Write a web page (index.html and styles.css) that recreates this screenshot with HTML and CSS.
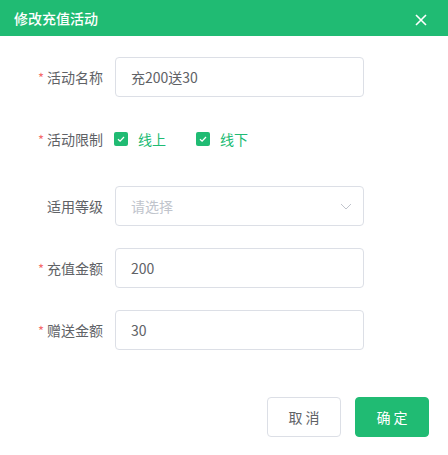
FILE: index.html
```
<!DOCTYPE html>
<html lang="zh-CN">
<head>
<meta charset="utf-8">
<title>修改充值活动</title>
<link rel="stylesheet" href="styles.css">
</head>
<body>
<div class="dialog">
  <div class="header">
    <span class="title">修改充值活动</span>
    <svg class="close" width="12" height="12" viewBox="0 0 12 12"><path d="M1 1L11 11M11 1L1 11" stroke="#fff" stroke-width="1.6" fill="none"/></svg>
  </div>
  <div class="form">
    <div class="row">
      <label class="label"><span class="req">*</span>活动名称</label>
      <div class="input"><span class="value">充200送30</span></div>
    </div>
    <div class="row row-check">
      <label class="label"><span class="req">*</span>活动限制</label>
      <div class="checks">
        <span class="check"><span class="box"><svg width="14" height="14" viewBox="0 0 14 14"><path d="M4 7.2L6.1 9.2L10 5" stroke="#fff" stroke-width="1.3" fill="none"/></svg></span><span class="ctext">线上</span></span>
        <span class="check"><span class="box"><svg width="14" height="14" viewBox="0 0 14 14"><path d="M4 7.2L6.1 9.2L10 5" stroke="#fff" stroke-width="1.3" fill="none"/></svg></span><span class="ctext">线下</span></span>
      </div>
    </div>
    <div class="row">
      <label class="label">适用等级</label>
      <div class="input select"><span class="placeholder">请选择</span>
        <svg class="arrow" width="12" height="7" viewBox="0 0 12 7"><path d="M1 1L6 6L11 1" stroke="#c0c4cc" stroke-width="1" fill="none"/></svg>
      </div>
    </div>
    <div class="row">
      <label class="label"><span class="req">*</span>充值金额</label>
      <div class="input"><span class="value">200</span></div>
    </div>
    <div class="row row-last">
      <label class="label"><span class="req">*</span>赠送金额</label>
      <div class="input"><span class="value">30</span></div>
    </div>
  </div>
  <div class="footer">
    <button class="btn btn-cancel">取 消</button>
    <button class="btn btn-ok">确 定</button>
  </div>
</div>
</body>
</html>
```
FILE: styles.css
```
html, body {
  margin: 0;
  padding: 0;
  background: #fff;
}
body {
  font-family: "Noto Sans CJK SC", "Noto Sans", sans-serif;
  width: 448px;
  height: 455px;
  overflow: hidden;
}
.dialog {
  width: 448px;
}
.header {
  height: 36px;
  background: #20bb73;
  display: flex;
  align-items: center;
  justify-content: space-between;
  padding: 0 21px 0 14px;
}
.title {
  color: #fff;
  font-size: 14px;
  font-weight: 500;
  line-height: 20px;
  margin-top: -1px;
}
.close {
  display: block;
  margin-top: 4px;
}
.form {
  padding-top: 21px;
}
.row {
  display: flex;
  align-items: center;
  height: 40px;
  margin-bottom: 22px;
}
.row-check {
  margin-bottom: 27px;
}
.row-last {
  margin-bottom: 0;
}
.label {
  width: 114px;
  box-sizing: border-box;
  padding-right: 11px;
  text-align: right;
  font-size: 14px;
  color: #606266;
  line-height: 40px;
}
.req {
  color: #f56c6c;
  margin-right: 3px;
  font-size: 13px;
}
.input {
  width: 249px;
  height: 40px;
  box-sizing: border-box;
  border: 1px solid #dcdfe6;
  border-radius: 4px;
  margin-left: 1px;
  padding: 0 15px;
  display: flex;
  align-items: center;
  font-size: 14px;
  color: #606266;
}
.select {
  justify-content: space-between;
  padding-right: 11px;
}
.placeholder {
  color: #c0c4cc;
}
.arrow {
  display: block;
}
.checks {
  display: flex;
  align-items: center;
}
.check {
  display: flex;
  align-items: center;
  margin-right: 30px;
}
.box {
  width: 14px;
  height: 14px;
  background: #20bb73;
  border-radius: 2px;
  display: block;
}
.box svg {
  display: block;
}
.ctext {
  margin-left: 10px;
  font-size: 14px;
  color: #20bb73;
}
.footer {
  display: flex;
  justify-content: flex-end;
  gap: 14px;
  padding-right: 19px;
  margin-top: 47px;
}
.btn {
  width: 74px;
  height: 40px;
  border-radius: 4px;
  font-family: "Noto Sans CJK SC", "Noto Sans", sans-serif;
  font-size: 14px;
  padding: 0;
  cursor: pointer;
}
.btn-cancel {
  background: #fff;
  border: 1px solid #dcdfe6;
  color: #606266;
}
.btn-ok {
  background: #20bb73;
  border: 1px solid #20bb73;
  color: #fff;
}
```
